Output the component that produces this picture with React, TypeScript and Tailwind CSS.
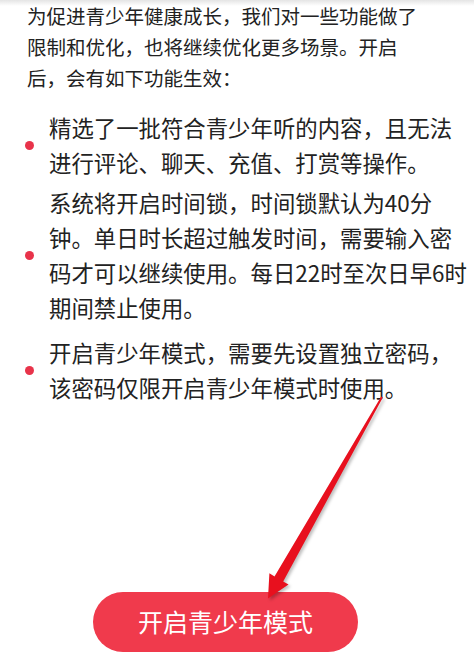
import React from "react";

const bullets: string[][] = [
  ["精选了一批符合青少年听的内容，且无法", "进行评论、聊天、充值、打赏等操作。"],
  [
    "系统将开启时间锁，时间锁默认为40分",
    "钟。单日时长超过触发时间，需要输入密",
    "码才可以继续使用。每日22时至次日早6时",
    "期间禁止使用。",
  ],
  ["开启青少年模式，需要先设置独立密码，", "该密码仅限开启青少年模式时使用。"],
];

const bulletMargins = ["mt-[17px]", "mt-[5px]", "mt-[10px]"];

function Lines({ lines }: { lines: string[] }) {
  return (
    <>
      {lines.map((l, i) => (
        <span key={i} className="block whitespace-nowrap">
          {l}
        </span>
      ))}
    </>
  );
}

function Arrow() {
  return (
    <svg
      className="absolute left-0 top-0 pointer-events-none drop-shadow-[2px_2px_1.5px_rgba(0,0,0,0.25)]"
      width="474"
      height="660"
      viewBox="0 0 474 660"
    >
      <polygon
        points="381.2,396.6 382.8,397.4 283.2,581.4 288.5,584.4 268,598.5 269.4,573.2 274.5,576.4"
        fill="#e8101e"
      />
    </svg>
  );
}

export default function App() {
  return (
    <div
      className="relative w-[474px] h-[660px] overflow-hidden bg-white text-[#222] [text-spacing-trim:space-all] [font-feature-settings:'chws'_0,'halt'_0,'palt'_0]"
      style={{ fontFamily: '"Noto Sans CJK SC", sans-serif' }}
    >
      <div className="absolute left-0 right-0 top-0 h-[6px] bg-gradient-to-b from-[#e4e4e4] to-transparent" />

      <p className="pl-[27px] text-[19.5px] leading-[31px]">
        <Lines
          lines={[
            "为促进青少年健康成长，我们对一些功能做了",
            "限制和优化，也将继续优化更多场景。开启",
            "后，会有如下功能生效：",
          ]}
        />
      </p>

      <ul>
        {bullets.map((lines, i) => (
          <li key={i} className={`flex items-center pl-[24.5px] ${bulletMargins[i]}`}>
            <span className="h-[9px] w-[9px] shrink-0 rounded-full bg-[#e8334a]" />
            <span className="ml-[15.5px] text-[22.4px] leading-[35px]">
              <Lines lines={lines} />
            </span>
          </li>
        ))}
      </ul>

      <button className="ml-[93px] mt-[187px] flex h-[60px] w-[265px] items-center justify-center rounded-full bg-[#f03a4c] text-[25px] text-white">
        开启青少年模式
      </button>

      <Arrow />
    </div>
  );
}
